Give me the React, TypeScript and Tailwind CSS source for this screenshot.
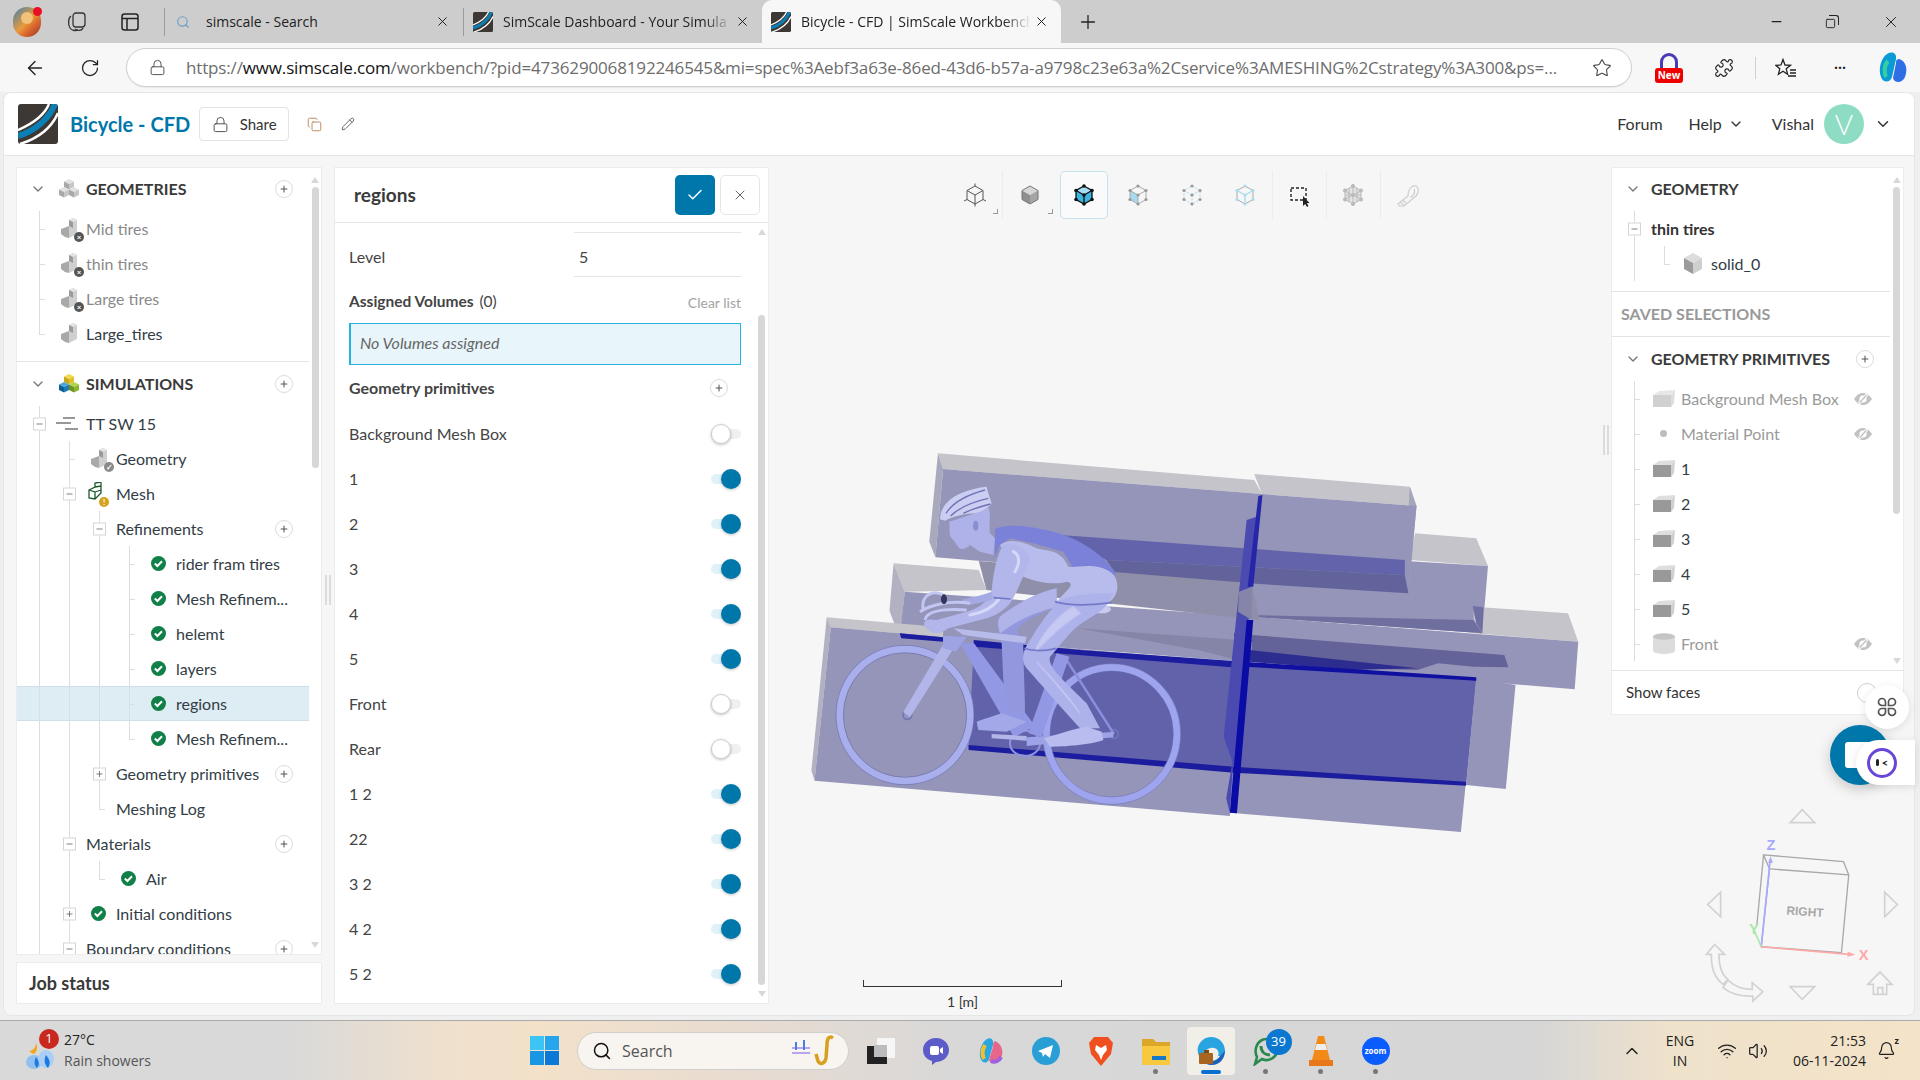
import type { ReactNode } from 'react'
import clsx from 'clsx'
import {
  ArrowLeft, Bell, Check, ChevronDown, ChevronUp, Copy, Lock, Pencil, Plus, Puzzle, RotateCw, Search, Star, Volume2, Wifi, X, Minus, Square,
} from 'lucide-react'

const Logo = ({ size = 40 }: { size?: number }) => (
  <svg width={size} height={size} viewBox="0 0 40 40">
    <rect width="40" height="40" rx="3" fill="#3d3833" />
    <path d="M0 26 C14 20 26 12 31 0" stroke="#fff" strokeWidth="2.5" fill="none" />
    <path d="M0 32 C17 27 31 15 37 0" stroke="#0a7fb5" strokeWidth="6" fill="none" />
    <path d="M2 40 C18 35 33 25 40 9" stroke="#fff" strokeWidth="2.5" fill="none" />
  </svg>
)

const PlusBtn = () => (
  <span className="flex h-[18px] w-[18px] shrink-0 items-center justify-center rounded-full border border-[#dcdcdc] bg-white text-[#555]">
    <Plus size={10} strokeWidth={2.5} />
  </span>
)

const HiddenEye = () => (
  <svg width="18" height="12" viewBox="0 0 18 12">
    <path d="M0 6 C3 1.5 6 0 9 0 C12 0 15 1.5 18 6 C15 10.5 12 12 9 12 C6 12 3 10.5 0 6Z" fill="#c2c2c2" />
    <circle cx="9" cy="6" r="3.6" fill="#fff" />
    <path d="M5 10.5 L13 1.5" stroke="#fff" strokeWidth="3" />
    <path d="M5.6 9.8 L12.4 2.2" stroke="#c2c2c2" strokeWidth="1.3" />
  </svg>
)

const Tires = ({ badge }: { badge?: 'x' | 'ok' | 'warn' }) => (
  <span className="relative ml-[5px] block h-[24px] w-[24px]">
    <svg width="16" height="20" viewBox="0 0 16 20" className="mt-[1px]">
      <path d="M8 2 L12 0 L16 2 L16 7 L16 16 L8 20 L8 8 Z" fill="#cfcfcf" />
      <path d="M8 2 L12 4 L16 2 L12 0Z" fill="#e4e4e4" />
      <path d="M8 8 L0 11 L0 16 L4 19 L8 20 Z" fill="#a9a9a9" />
      <path d="M8 2 L8 8 L12 10 L12 4Z" fill="#9a9a9a" />
    </svg>
    {badge && (
      <span className={clsx('absolute bottom-[-1px] right-[1px] flex h-[10px] w-[10px] items-center justify-center rounded-full text-[8px] font-bold leading-none text-white', badge === 'x' && 'bg-[#555]', badge === 'ok' && 'bg-[#8a8a8a]')}>
        {badge === 'x' ? '×' : '✓'}
      </span>
    )}
  </span>
)

const MeshIcon = () => (
  <span className="relative ml-[1px] block h-[24px] w-[24px]">
    <svg width="18" height="18" viewBox="0 0 18 18" fill="none" stroke="#1f5a2e" strokeWidth="1.3">
      <path d="M2 8 L8 5 L8 1 L14 0 L14 11 L8 17 L2 16 Z M8 5 L14 4 M2 8 L8 10 L8 17 M8 10 L14 8" />
    </svg>
    <span className="absolute bottom-[-1px] right-[2px] flex h-[10px] w-[10px] items-center justify-center rounded-full bg-[#d6a21d] text-[8px] font-bold leading-none text-white">!</span>
  </span>
)

const IsoCube = ({ x, y, shades }: { x: number; y: number; shades: [string, string, string] }) => (
  <g transform={`translate(${x} ${y})`}>
    <path d="M5 0 L10 2.5 L5 5 L0 2.5Z" fill={shades[0]} />
    <path d="M0 2.5 L5 5 L5 10.5 L0 8Z" fill={shades[1]} />
    <path d="M10 2.5 L5 5 L5 10.5 L10 8Z" fill={shades[2]} />
  </g>
)

const GeoCluster = ({ color }: { color: boolean }) => (
  <svg width="20" height="19" viewBox="0 0 20 19" className="ml-[3px]">
    <IsoCube x={5} y={0} shades={color ? ['#f2d84a', '#c9a81e', '#e0bf2a'] : ['#e2e2e2', '#a8a8a8', '#c6c6c6']} />
    <IsoCube x={0} y={8} shades={color ? ['#4aa6de', '#0c5f96', '#1b7ab8'] : ['#e2e2e2', '#a8a8a8', '#c6c6c6']} />
    <IsoCube x={10} y={8} shades={color ? ['#b2d44a', '#6f9420', '#8bb52e'] : ['#e2e2e2', '#a8a8a8', '#c6c6c6']} />
  </svg>
)

const SimIcon = () => (
  <svg width="22" height="14" viewBox="0 0 22 14" stroke="#777" strokeWidth="1.4">
    <path d="M7 1 H19 M0 6 H15 M9 12 H22" />
  </svg>
)

const Ok = ({ className = '' }: { className?: string }) => (
  <svg width="15" height="15" viewBox="0 0 15 15" className={clsx('ml-[5px]', className)}>
    <circle cx="7.5" cy="7.5" r="7.5" fill="#108048" />
    <path d="M3.8 7.6 L6.4 10 L11 5.2" stroke="#fff" strokeWidth="2" fill="none" />
  </svg>
)

const PrimBox = ({ muted }: { muted?: boolean }) => (
  <svg width="22" height="17" viewBox="0 0 22 17" className={clsx('ml-[2px]', muted && 'opacity-70')}>
    <path d="M0 5 L6 1 L22 0 L18 5 Z" fill="#dedede" />
    <path d="M18 5 L22 0 L21 13 L18 17 Z" fill="#d0d0d0" />
    <rect y="5" width="18" height="12" fill={muted ? '#bdbdbd' : '#999'} />
  </svg>
)

const Cylinder = () => (
  <svg width="22" height="21" viewBox="0 0 22 21" className="ml-[2px]">
    <rect y="3" width="22" height="15" fill="#dcdcdc" />
    <ellipse cx="11" cy="18" rx="11" ry="3" fill="#dcdcdc" />
    <ellipse cx="11" cy="3.5" rx="11" ry="3.2" fill="#c4c4c4" />
  </svg>
)

const Cube = () => (
  <svg width="18" height="21" viewBox="0 0 18 21" className="ml-[3px]">
    <path d="M9 0 L18 5 L9 10 L0 5Z" fill="#dcdcdc" />
    <path d="M0 5 L9 10 L9 21 L0 16Z" fill="#9b9b9b" />
    <path d="M18 5 L9 10 L9 21 L18 16Z" fill="#cfcfcf" />
  </svg>
)

type RowProps = {
  depth?: number
  box?: '+' | '-'
  end?: boolean
  icon?: ReactNode
  label: string
  plus?: boolean
  eye?: boolean
  tone?: string
  active?: boolean
}

const Row = ({ depth = 1, box, end, icon, label, plus, eye, tone = 'text-[#333d45]', active }: RowProps) => (
  <div className={clsx('flex h-[35px] items-stretch pl-[22px] pr-4', active && 'border-y border-[#cde0ea] bg-[#deecf4]')}>
    {Array.from({ length: depth - 1 }, (_, i) => (
      <span key={i} className="w-[30px] shrink-0 border-l border-[#d8dfe3]" />
    ))}
    <span className="relative w-[17px] shrink-0">
      <span className={clsx('absolute left-0 top-0 w-px bg-[#d8dfe3]', end ? 'h-1/2' : 'h-full')} />
      <span className="absolute left-0 top-1/2 h-px w-[6px] bg-[#d8dfe3]" />
      {box && (
        <span className="absolute left-[-6px] top-1/2 flex h-[13px] w-[13px] -translate-y-1/2 items-center justify-center border border-[#d5d5d5] bg-white text-[#555]">
          {box === '+' ? <Plus size={9} /> : <Minus size={9} />}
        </span>
      )}
    </span>
    {icon && <span className="flex w-[30px] shrink-0 items-center">{icon}</span>}
    <span className={clsx('flex flex-1 items-center whitespace-nowrap text-[16px]', tone)}>{label}</span>
    {plus && <span className="flex items-center"><PlusBtn /></span>}
    {eye && (
      <span className="flex items-center pr-[2px]">
        <HiddenEye />
      </span>
    )}
  </div>
)

const Section = ({ label, icon, plus, className = '' }: { label: string; icon?: ReactNode; plus?: boolean; className?: string }) => (
  <div className={clsx('flex h-[35px] items-center pl-[13px] pr-4', className)}>
    <span className="flex w-[26px] shrink-0 text-[#777]"><ChevronDown size={16} /></span>
    {icon && <span className="flex w-[30px] shrink-0 items-center">{icon}</span>}
    <span className="flex-1 whitespace-nowrap text-[16px] font-bold text-[#3a3a3a]">{label}</span>
    {plus && <PlusBtn />}
  </div>
)

const ScrollBar = ({ top, height, gapTop = 0, w = 'w-[13px]' }: { top: number; height: number; gapTop?: number; w?: string }) => (
  <div className={clsx('flex shrink-0 flex-col items-center', w)} style={{ paddingTop: top }}>
    <span className="h-0 w-0 border-x-[4px] border-b-[6px] border-x-transparent border-b-[#d8d8d8]" />
    <span className="w-[7px] rounded-full bg-[#d7d7d7]" style={{ height, marginTop: gapTop }} />
    <span className="flex-1" />
    <span className="mb-[6px] h-0 w-0 border-x-[4px] border-t-[6px] border-x-transparent border-t-[#d8d8d8]" />
  </div>
)

const Toggle = ({ on }: { on?: boolean }) => (
  <span className={clsx('flex h-[10px] w-[30px] items-center rounded-full', on ? 'justify-end bg-[#dff1f9]' : 'justify-start bg-[#f0f0f0]')}>
    <span className={clsx('h-[20px] w-[20px] rounded-full shadow-[0_1px_3px_rgba(0,0,0,.25)]', on ? 'bg-[#0077aa]' : 'border border-[#cfcfcf] bg-white')} />
  </span>
)

const toggles: [string, boolean][] = [
  ['Background Mesh Box', false], ['1', true], ['2', true], ['3', true], ['4', true], ['5', true],
  ['Front', false], ['Rear', false], ['1 2', true], ['22', true], ['3 2', true], ['4 2', true], ['5 2', true],
]

const hex = 'M12 3 L20 7.5 L20 16.5 L12 21 L4 16.5 L4 7.5 Z'
const inner = 'M4 7.5 L12 12 L20 7.5 M12 12 L12 21'
const Dots = ({ fill, r = 1.6 }: { fill: string; r?: number }) => (
  <>
    {[[12, 3], [20, 7.5], [20, 16.5], [12, 21], [4, 16.5], [4, 7.5], [12, 12]].map(([x, y]) => (
      <circle key={`${x}-${y}`} cx={x} cy={y} r={r} fill={fill} />
    ))}
  </>
)

const ToolIcon = ({ kind }: { kind: number }) => (
  <svg width="24" height="24" viewBox="0 0 24 24" fill="none">
    {kind === 1 && (
      <>
        <path d={hex} stroke="#555" strokeWidth="1" />
        <path d={inner} stroke="#555" strokeWidth="1" />
        <path d="M12 3 V0.5 M20 16.5 L23 18 M4 16.5 L1 18 M12 21 V23.5" stroke="#555" strokeWidth="1" />
      </>
    )}
    {kind === 2 && (
      <>
        <path d="M12 3 L20 7.5 L12 12 L4 7.5Z" fill="#d7d7d7" />
        <path d="M4 7.5 L12 12 L12 21 L4 16.5Z" fill="#8f8f8f" />
        <path d="M20 7.5 L12 12 L12 21 L20 16.5Z" fill="#a5a5a5" />
        <path d={hex} stroke="#777" strokeWidth="1" />
      </>
    )}
    {kind === 3 && (
      <>
        <path d="M12 3 L20 7.5 L12 12 L4 7.5Z" fill="#a6dff4" />
        <path d="M4 7.5 L12 12 L12 21 L4 16.5Z" fill="#3cb4e0" />
        <path d="M20 7.5 L12 12 L12 21 L20 16.5Z" fill="#3cb4e0" />
        <path d={hex} stroke="#111" strokeWidth="1.3" />
        <path d={inner} stroke="#111" strokeWidth="1.3" />
        <Dots fill="#111" r={1.8} />
      </>
    )}
    {kind === 4 && (
      <>
        <path d="M4 7.5 L12 12 L12 21 L4 16.5Z" fill="#a9d9ec" />
        <path d={hex} stroke="#aaa" strokeWidth="1" />
        <path d={inner} stroke="#aaa" strokeWidth="1" />
        <Dots fill="#999" />
      </>
    )}
    {kind === 5 && (
      <>
        <path d={hex} stroke="#a9d9ec" strokeWidth="1" strokeDasharray="2 1.4" />
        <path d={inner} stroke="#a9d9ec" strokeWidth="1" strokeDasharray="2 1.4" />
        <Dots fill="#999" />
      </>
    )}
    {kind === 6 && (
      <>
        <path d={hex} stroke="#aaa" strokeWidth="1" />
        <path d={inner} stroke="#a9dcf0" strokeWidth="1.4" />
        <Dots fill="#a9dcf0" />
      </>
    )}
    {kind === 7 && (
      <>
        <rect x="4" y="5" width="15" height="12" stroke="#222" strokeWidth="1.4" strokeDasharray="3 2" />
        <path d="M16 13 L16 23 L18.2 21 L20 24 L21.5 23 L19.8 20.2 L22.5 20 Z" fill="#222" />
      </>
    )}
    {kind === 8 && (
      <g stroke="#bbb" strokeWidth="1">
        <path d={hex} fill="#e3e3e3" />
        <path d="M8 5 V19 M12 3 V21 M16 5 V19 M4 12 L20 12 M4 8 L20 16 M4 16 L20 8" />
        <Dots fill="#bbb" />
      </g>
    )}
    {kind === 9 && (
      <path d="M2 21 L12 13 C12 6 16 2 20 3 C23 4 23 10 20 13 L8 23 L3 23 Z M14 14 C17 14 20 9 18 6 M4 19 L8 22 M7 17 L10 20" stroke="#ccc" strokeWidth="1.1" />
    )}
  </svg>
)

const Tool = ({ kind, corner, active, sep }: { kind: number; corner?: boolean; active?: boolean; sep?: boolean }) => (
  <span className={clsx('relative flex h-[48px] w-[54px] items-center justify-center', sep && 'border-r border-[#ececec]')}>
    {active && <span className="absolute inset-y-0 left-[3px] right-[3px] rounded-[5px] border border-[#c5e2ef] bg-[#fafafa]" />}
    <span className="relative flex"><ToolIcon kind={kind} /></span>
    {corner && <span className="absolute bottom-[5px] right-[4px] h-[5px] w-[5px] border-b border-r border-[#999]" />}
  </span>
)

const Rider = () => (
  <g transform="translate(137.2 180) scale(.6533 1)">
    {/* wheels */}
    <g fill="none">
      <ellipse cx="135" cy="705" rx="196" ry="198" stroke="#a9aeec" strokeWidth="22" />
      <ellipse cx="135" cy="705" rx="207" ry="209" stroke="#5a5d9c" strokeWidth="1.5" />
      <ellipse cx="135" cy="705" rx="185" ry="187" stroke="#5a5d9c" strokeWidth="1.5" />
      <ellipse cx="755" cy="762" rx="196" ry="200" stroke="#9ea4ee" strokeWidth="22" />
      <ellipse cx="755" cy="762" rx="207" ry="211" stroke="#6a6dac" strokeWidth="1.5" />
      <ellipse cx="755" cy="762" rx="185" ry="189" stroke="#6a6dac" strokeWidth="1.5" />
      <ellipse cx="495" cy="790" rx="45" ry="38" stroke="#8f94dd" strokeWidth="6" />
      <circle cx="142" cy="705" r="13" stroke="#7075b8" strokeWidth="5" />
      <circle cx="762" cy="762" r="13" stroke="#7075b8" strokeWidth="5" />
      <path d="M620 540 L762 762" stroke="#8a8fde" strokeWidth="7" />
    </g>
    {/* frame */}
    <path d="M252 490 L284 500 L150 712 L130 696Z" fill="#b1b5e8" />
    <path d="M250 468 L320 470 L288 515 L248 505Z" fill="#9ea3e4" />
    <path d="M300 490 L342 490 L525 738 L462 772Z" fill="#9298e4" />
    <path d="M590 520 L628 530 L545 770 L505 760Z" fill="#9298e4" />
    <path d="M500 772 L760 756 L760 772 L500 798Z" fill="#9ea3e8" />
    <path d="M395 762 L500 768 L500 782 L395 775Z" fill="#b1b5e8" />
    {/* far leg */}
    <path d="M590 325 C540 335 470 370 420 410 C405 430 420 460 425 490 L430 600 C435 650 445 680 455 700 L495 695 C495 640 490 560 490 490 L470 450 C490 420 540 400 590 380Z" fill="#9398de" />
    <path d="M590 325 C540 335 470 370 420 410 C410 425 415 440 420 460 C470 420 530 395 590 380Z" fill="#b0b4e8" />
    <path d="M350 725 C380 715 410 705 425 700 L500 725 L440 755 L355 750 Z" fill="#a3a8e8" />
    <path d="M280 445 L500 470 L495 490 L310 465Z" fill="#b7bbea" />
    {/* jersey and torso */}
    <path d="M405 148 C430 130 500 135 580 155 C660 175 740 230 770 285 L640 265 L610 215 L520 190 L450 175 L420 195 L405 230Z" fill="#7b80d8" />
    <path d="M420 195 C450 170 500 190 530 205 C560 215 600 205 625 260 C650 265 700 245 750 275 C775 290 780 330 760 355 C745 375 715 375 690 375 L590 365 C620 330 650 310 620 305 C590 315 540 310 490 290 C470 260 440 230 420 195Z" fill="#b8bcec" />
    <ellipse cx="725" cy="388" rx="28" ry="12" fill="#c8cbf0" />
    {/* near leg */}
    <path d="M760 340 C740 400 690 405 640 450 C610 480 590 510 570 530 C560 560 620 610 680 670 L720 745 L660 745 C600 680 540 610 500 565 C480 540 490 510 510 480 C540 430 570 390 600 360 C650 340 720 340 760 340 Z" fill="#aeb2ea" />
    <path d="M640 380 C590 410 540 470 525 515 C560 480 610 430 660 400Z M530 545 C570 590 620 640 660 700" fill="#c6c9f2" stroke="#c6c9f2" strokeWidth="6" strokeOpacity=".55" />
    <path d="M552 775 C600 760 650 745 680 740 L725 755 L730 780 C690 795 610 800 570 800Z" fill="#b9bcee" />
    {/* near arm */}
    <path d="M430 195 C470 180 520 215 505 250 C490 290 470 340 450 370 C430 395 400 410 380 415 L265 445 C240 465 215 465 195 440 C185 420 205 415 230 420 L320 395 C360 385 390 360 395 330 C400 280 410 225 430 195Z" fill="#b2b6ea" />
    <path d="M460 215 C480 225 480 250 465 275 M330 405 C360 400 395 385 415 360" stroke="#d6d8f7" strokeWidth="9" fill="none" strokeLinecap="round" />
    <path d="M395 335 C370 345 340 350 305 360 L330 375 L395 360Z" fill="#a4a9e2" />
    {/* bands where the block edge passes through */}
    <path d="M585 365 C640 380 690 375 755 368 M492 505 C520 515 560 512 590 505 M400 353 L452 357" stroke="#7478cc" strokeWidth="5" fill="none" />
    {/* handlebars */}
    <g fill="none" stroke="#c2c6f2" strokeWidth="9">
      <path d="M190 390 C180 345 220 328 250 345" />
      <path d="M180 395 C210 375 270 360 330 370" />
      <path d="M195 420 C200 395 240 385 320 390" />
    </g>
    <ellipse cx="252" cy="358" rx="9" ry="15" fill="#33345f" />
    {/* head */}
    <path d="M268 125 L345 100 L385 80 C395 110 385 140 390 160 L405 175 L400 225 L360 215 L330 195 C320 205 305 210 298 205 C290 195 285 185 275 175 C265 165 270 145 268 125Z" fill="#aeb2e8" />
    <ellipse cx="347" cy="137" rx="8" ry="15" fill="#8a8fd0" />
    <path d="M240 118 C240 70 290 30 380 20 C385 45 395 65 395 72 C380 85 365 95 345 100 C310 100 275 112 255 122 Z" fill="#cbcef1" />
    <path d="M258 100 C280 65 320 45 375 30 M272 108 C300 80 340 65 385 55 M310 100 C330 90 360 80 392 72" stroke="#6f74b8" strokeWidth="4" fill="none" />
  </g>
)

const Scene = () => (
  <svg width="800" height="450" viewBox="0 0 1568 1350" preserveAspectRatio="none" className="absolute left-[21px] top-[253px]">
    {/* rear blocks */}
    <polygon points="1225,340 1345,355 1368,438 1215,420" fill="#c4c4ca" />
    <polygon points="905,395 1368,438 1357,640 905,590" fill="#9595b9" />
    <polygon points="1340,560 1525,580 1545,665 1340,640" fill="#c4c4ca" />
    <polygon points="905,590 1545,665 1538,808 900,725" fill="#9595b9" />
    <polygon points="1338,558 1360,562 1357,640 1345,610" fill="#6f6fa4" />
    <polygon points="905,585 1340,600 1357,640 905,590" fill="#6f6f9f" />
    <polygon points="905,645 1400,705 1408,742 1340,740 1270,730 1230,750 1100,745 905,725" fill="#636399" />
    <polygon points="900,690 1230,745 1100,750 900,725" fill="#2d2d8f" />
    <polygon points="290,100 910,180 925,222 300,147" fill="#c4c4ca" />
    <polygon points="290,100 300,147 285,412 273,365" fill="#a9a9bd" />
    <polygon points="300,147 925,222 905,490 285,412" fill="#9595b9" />
    <polygon points="910,162 1215,200 1228,258 925,222" fill="#c4c4ca" />
    <polygon points="1215,200 1228,258 1212,520 1204,470" fill="#a5a5bb" />
    <polygon points="925,222 1228,258 1212,520 905,490" fill="#9595b9" />
    <polygon points="530,345 1205,420 1205,465 620,420" fill="#6363ab" />
    <polygon points="620,420 1205,465 1212,520 640,465" fill="#63639b" />
    {/* middle block */}
    <polygon points="203,430 370,450 385,510 225,515" fill="#c4c4ca" />
    <polygon points="203,430 225,515 215,655 195,572" fill="#b1b1c2" />
    <polygon points="225,515 905,590 890,725 215,645" fill="#9595b9" />
    <polygon points="565,625 880,660 890,725 800,690" fill="#8585a8" />
    {/* front blocks */}
    <polygon points="1345,775 1422,795 1403,1107 1325,1095" fill="#9595b9" />
    <polygon points="72,592 300,622 300,652 80,622" fill="#c4c4ca" />
    <polygon points="72,592 80,622 48,1082 42,1052" fill="#b1b1c2" />
    <polygon points="80,622 890,730 862,1188 48,1082" fill="#9595b9" />
    <polygon points="890,730 1345,775 1315,1236 862,1178" fill="#9595b9" />
    <polygon points="360,680 890,735 1345,775 1325,1095 350,985" fill="#6262ab" />
    <polygon points="215,640 300,652 300,665 218,655" fill="#1c1c9e" />
    <polygon points="360,660 570,690 890,725 890,745 360,680" fill="#1c1c9e" />
    <polygon points="890,725 1345,772 1345,782 890,740" fill="#1010a0" />
    <polygon points="350,975 870,1040 1325,1085 1325,1097 870,1058 350,990" fill="#1c1c9e" />
    <polygon points="870,640 905,660 890,730 880,720" fill="#2a2a8a" />
    {/* underside between the upper and middle blocks */}
    <polygon points="370,423 905,490 920,600 385,510" fill="#8f8fa9" />
    {/* centre slabs */}
    <polygon points="895,300 915,290 875,1060 850,950" fill="#4a4ab0" />
    <polygon points="918,228 926,225 908,500 897,500" fill="#2626a8" />
    <polygon points="895,600 908,600 876,1180 862,1178" fill="#0b0ba6" />
    <polygon points="855,1135 870,1000 862,1178" fill="#4a4ab0" />
    <polygon points="880,515 905,500 905,600 878,575" fill="#8585a9" />
    <Rider />
  </svg>
)

const Gizmo = () => (
  <svg width="213" height="203" viewBox="100 430 640 610" fill="none" className="absolute left-[924px] top-[636px]">
    <g stroke="#d2d2d2" strokeWidth="5">
      <path d="M392 489 L428 450 L466 489 Z" />
      <path d="M392 982 L466 982 L428 1020 Z" />
      <path d="M183 698 L183 772 L144 735 Z" />
      <path d="M676 698 L676 772 L714 735 Z" />
      <path d="M140 885 L165 855 L195 885 L178 885 C178 920 185 945 205 960 L190 975 C160 950 155 920 155 885 Z" />
      <path d="M190 985 L205 962 C230 985 250 990 278 990 L278 970 L310 997 L280 1025 L280 1010 C245 1012 215 1005 190 985 Z" />
      <path d="M625 975 L662 938 L698 975 L682 975 L682 1005 L642 1005 L642 975 Z M655 1005 V985 H670 V1005" />
    </g>
    <g stroke="#a8a8a8" strokeWidth="4">
      <path d="M312 586 L552 606 L568 646 L546 880 L305 862 L330 628 Z" />
      <path d="M312 586 L292 795 M330 628 L568 646" />
    </g>
    <text x="380" y="765" fontFamily="Liberation Sans, sans-serif" fontWeight="700" fontSize="36" fill="#a8a8a8" transform="rotate(4 380 765)">RIGHT</text>
    <path d="M305 862 L332 600" stroke="#a8a8ff" strokeWidth="5" />
    <path d="M326 610 L333 590 L340 610Z" fill="#a8a8ff" />
    <path d="M305 862 L570 885" stroke="#ffa8a8" strokeWidth="5" />
    <path d="M565 877 L588 886 L564 892Z" fill="#ffa8a8" />
    <path d="M305 862 L285 815" stroke="#a8e8a8" strokeWidth="5" />
    <text x="321" y="571" fontFamily="Liberation Sans, sans-serif" fontWeight="700" fontSize="44" fill="#a8a8ff">Z</text>
    <text x="598" y="902" fontFamily="Liberation Sans, sans-serif" fontWeight="700" fontSize="44" fill="#ffa8a8">X</text>
    <text x="268" y="824" fontFamily="Liberation Sans, sans-serif" fontWeight="700" fontSize="44" fill="#a8e8a8">Y</text>
  </svg>
)

const Grip = () => (
  <span className="flex gap-[2px]">
    <span className="h-[30px] w-[2px] bg-[#dcdcdc]" />
    <span className="h-[30px] w-[2px] bg-[#dcdcdc]" />
  </span>
)

const TabFav = () => <span className="mr-[10px] shrink-0"><Logo size={20} /></span>

const TabBar = () => (
  <div className="flex h-[43px] items-center bg-[#cdcdcd] [font-family:'Open_Sans',sans-serif] text-[14px] text-[#222]">
    <div className="flex w-[164px] shrink-0 items-center pl-[13px]">
      <span className="relative block h-[30px] w-[28px] rounded-full bg-[linear-gradient(135deg,#3d7fb5,#e89b3a_50%,#d9622c_70%,#8a3a2c)]">
        <span className="absolute left-[8px] top-[5px] h-[12px] w-[12px] rounded-full bg-[#f3c27a]" />
        <span className="absolute right-[-1px] top-0 h-[9px] w-[9px] rounded-full bg-[#e81123]" />
      </span>
      <svg width="22" height="22" viewBox="0 0 22 22" fill="none" stroke="#333" strokeWidth="1.3" className="ml-[25px]">
        <rect x="7" y="2" width="12" height="14" rx="3" />
        <path d="M5 5 C2 7 2 14 4 17 C6 20 10 20 12 19" />
        <path d="M9 18 C12 20 16 20 17 17" />
      </svg>
      <svg width="20" height="20" viewBox="0 0 20 20" fill="none" stroke="#222" strokeWidth="1.5" className="ml-[32px]">
        <rect x="2" y="2" width="16" height="16" rx="2.5" />
        <path d="M2 6.5 H18 M7 6.5 V18" />
      </svg>
    </div>
    <div className="flex h-[28px] w-[299px] shrink-0 items-center border-l border-[#9b9b9b] pl-[11px] pr-[13px]">
      <Search size={14} className="mr-[16px] text-[#6f9fc4]" />
      <span className="flex-1">simscale - Search</span>
      <X size={15} strokeWidth={1.6} />
    </div>
    <div className="flex h-[28px] w-[299px] shrink-0 items-center border-l border-[#9b9b9b] pl-[9px] pr-[12px]">
      <TabFav />
      <span className="flex-1 overflow-hidden whitespace-nowrap [mask-image:linear-gradient(90deg,#000_88%,transparent)]">SimScale Dashboard - Your Simula</span>
      <X size={15} strokeWidth={1.6} className="ml-[3px] shrink-0" />
    </div>
    <div className="flex h-[43px] w-[299px] shrink-0 items-center self-end rounded-t-[10px] bg-[#f7f7f7] pl-[9px] pr-[12px]">
      <TabFav />
      <span className="flex-1 overflow-hidden whitespace-nowrap [mask-image:linear-gradient(90deg,#000_88%,transparent)]">Bicycle - CFD | SimScale Workbench</span>
      <X size={15} strokeWidth={1.6} className="ml-[3px] shrink-0" />
    </div>
    <Plus size={22} strokeWidth={1.4} className="ml-[16px]" />
    <div className="flex-1" />
    <Minus size={15} className="mr-[41px]" />
    <span className="relative mr-[43px] block h-[14px] w-[14px]">
      <Square size={11} className="absolute bottom-0 left-0" />
      <span className="absolute right-0 top-0 h-[10px] w-[10px] rounded-tr-[3px] border-r border-t border-[#222]" />
    </span>
    <X size={18} strokeWidth={1.3} className="mr-[20px]" />
  </div>
)

const AddressBar = () => (
  <div className="flex h-[49px] items-center bg-[#f7f7f7] [font-family:'Open_Sans',sans-serif] text-[#222]">
    <ArrowLeft size={22} strokeWidth={1.5} className="ml-[24px]" />
    <RotateCw size={20} strokeWidth={1.5} className="ml-[34px]" />
    <div className="ml-[26px] flex h-[39px] w-[1506px] items-center rounded-full border border-[#cfcfcf] bg-white pl-[22px] pr-[19px] shadow-[0_1px_1px_rgba(0,0,0,.06)]">
      <Lock size={17} strokeWidth={1.4} className="text-[#555]" />
      <span className="ml-[20px] flex-1 truncate text-[17px] tracking-[-0.15px] text-[#6d6d6d]">
        https://<span className="text-[#111]">www.simscale.com</span>/workbench/?pid=4736290068192246545&amp;mi=spec%3Aebf3a63e-86ed-43d6-b57a-a9798c23e63a%2Cservice%3AMESHING%2Cstrategy%3A300&amp;ps=...
      </span>
      <Star size={20} strokeWidth={1.3} className="ml-[16px] text-[#444]" />
    </div>
    <span className="relative ml-[23px] block h-[30px] w-[28px]">
      <span className="absolute left-[5px] top-0 h-[20px] w-[18px] rounded-t-full border-[3px] border-[#4a3bb5]" />
      <span className="absolute bottom-0 left-0 flex h-[15px] w-[28px] items-center justify-center rounded-[3px] bg-[#ee0000] text-[10px] font-bold leading-none text-white">New</span>
    </span>
    <Puzzle size={20} strokeWidth={1.4} className="ml-[31px]" />
    <span className="ml-[21px] h-[22px] w-px bg-[#cfcfcf]" />
    <svg width="22" height="20" viewBox="0 0 22 20" fill="none" stroke="#222" strokeWidth="1.3" className="ml-[19px]">
      <path d="M8 1.5 L10 7 L15.5 7.3 L11.2 10.8 L12.6 16.2 L8 13.2 L3.4 16.2 L4.8 10.8 L0.8 7.3 L6 7Z" />
      <path d="M15 12 H21 M15 15 H21 M13 18 H21" />
    </svg>
    <span className="ml-[37px] text-[14px] font-bold leading-none">···</span>
    <svg width="30" height="34" viewBox="0 0 30 34" className="ml-[32px]">
      <path d="M9 3 C14 0 19 2 18 8 L14 26 C12 32 5 32 3 26 C0 18 3 7 9 3Z" fill="#0a9ad6" />
      <path d="M21 8 C28 10 30 18 27 26 C24 33 16 32 15 27 L18 12 C18 9 19 8 21 8Z" fill="#2f6ee5" />
      <path d="M10 10 C6 14 6 22 8 26" stroke="#35d0a0" strokeWidth="4" fill="none" />
    </svg>
  </div>
)

const AppHeader = () => (
  <div className="flex h-[63px] items-center rounded-t-[8px] border-b border-[#e6e6e6] bg-white pl-[14px] text-[#333]">
    <Logo size={40} />
    <span className="ml-[12px] text-[20px] font-bold text-[#0077aa]">Bicycle - CFD</span>
    <span className="ml-[9px] flex h-[34px] w-[90px] items-center justify-center gap-[11px] rounded-[4px] border border-[#e4e4e4] text-[15px]">
      <Lock size={17} strokeWidth={1.4} className="text-[#555]" />
      Share
    </span>
    <Copy size={15} strokeWidth={1.4} className="ml-[18px] text-[#b57d4e]" />
    <Pencil size={14} strokeWidth={1.5} className="ml-[19px] text-[#555]" />
    <div className="flex-1" />
    <span className="text-[16px]">Forum</span>
    <span className="ml-[26px] text-[16px]">Help</span>
    <ChevronDown size={16} className="ml-[6px]" />
    <span className="ml-[28px] text-[16px]">Vishal</span>
    <span className="ml-[10px] flex h-[40px] w-[40px] items-center justify-center rounded-full bg-[#8fdcc5] text-[28px] font-light text-white">V</span>
    <ChevronDown size={18} className="ml-[10px] mr-[22px]" />
  </div>
)

// every row below sits under "TT SW 15", so its trunk line is drawn by depth
const TreeBody = () => (
  <>
    <Row depth={2} icon={<Tires badge="ok" />} label="Geometry" />
    <Row depth={2} box="-" icon={<MeshIcon />} label="Mesh" />
    <Row depth={3} box="-" label="Refinements" plus />
    <Row depth={4} icon={<Ok />} label="rider fram tires" />
    <Row depth={4} icon={<Ok />} label="Mesh Refinem..." />
    <Row depth={4} icon={<Ok />} label="helemt" />
    <Row depth={4} icon={<Ok />} label="layers" />
    <Row depth={4} icon={<Ok />} label="regions" active />
    <Row depth={4} end icon={<Ok />} label="Mesh Refinem..." />
    <Row depth={3} box="+" label="Geometry primitives" plus />
    <Row depth={3} end label="Meshing Log" />
    <Row depth={2} box="-" label="Materials" plus />
    <Row depth={3} end icon={<Ok />} label="Air" />
    <Row depth={2} box="+" icon={<Ok />} label="Initial conditions" />
    <Row depth={2} box="-" label="Boundary conditions" plus />
  </>
)

const LeftPanel = () => (
  <div className="flex w-[306px] shrink-0 flex-col gap-[7px]">
    <div className="flex h-[788px] overflow-hidden border border-[#ececec] bg-white">
      <div className="flex-1 overflow-hidden pt-[3px]">
        <Section label="GEOMETRIES" icon={<GeoCluster color={false} />} plus className="mb-[5px]" />
        <Row icon={<Tires badge="x" />} label="Mid tires" tone="text-[#8a8a8a]" />
        <Row icon={<Tires badge="x" />} label="thin tires" tone="text-[#8a8a8a]" />
        <Row icon={<Tires badge="x" />} label="Large tires" tone="text-[#8a8a8a]" />
        <Row end icon={<Tires />} label="Large_tires" />
        <div className="mb-[4px] mt-[10px] h-px bg-[#e4e4e4]" />
        <Section label="SIMULATIONS" icon={<GeoCluster color />} plus className="mb-[5px]" />
        <Row box="-" icon={<SimIcon />} label="TT SW 15" />
        <TreeBody />
      </div>
      <ScrollBar top={9} height={281} gapTop={4} w="w-[12px]" />
    </div>
    <div className="flex h-[42px] items-center border border-[#ececec] bg-white pl-[12px] text-[18px] font-bold text-[#3a3a3a]">Job status</div>
  </div>
)

const CenterPanel = () => (
  <div className="flex w-[435px] shrink-0 flex-col overflow-hidden border border-[#ececec] bg-white text-[#444]">
    <div className="flex h-[55px] shrink-0 items-center border-b border-[#e6e6e6] pl-[19px] pr-[8px]">
      <span className="flex-1 text-[19px] font-bold text-[#3a3a3a]">regions</span>
      <span className="flex h-[40px] w-[40px] items-center justify-center rounded-[5px] bg-[#0077aa] text-white"><Check size={18} /></span>
      <span className="ml-[5px] flex h-[40px] w-[40px] items-center justify-center rounded-[5px] border border-[#e6e6e6] text-[#666]"><X size={16} strokeWidth={1.5} /></span>
    </div>
    <div className="flex min-h-0 flex-1">
      <div className="ml-[14px] w-[392px] shrink-0 overflow-hidden pt-[9px]">
        <div className="ml-[225px] h-px bg-[#e6e6e6]" />
        <div className="flex h-[43px] items-center pt-[5px] text-[16px]">
          <span className="w-[230px]">Level</span>
          <span>5</span>
        </div>
        <div className="ml-[225px] h-px bg-[#e6e6e6]" />
        <div className="mt-[13px] flex h-[24px] items-center justify-between">
          <span className="text-[15.5px] font-bold">Assigned Volumes <span className="ml-[2px] font-normal">(0)</span></span>
          <span className="text-[14px] text-[#a3a3a3]">Clear list</span>
        </div>
        <div className="mt-[9px] flex h-[42px] items-center border border-l-2 border-[#25b3e3] bg-[#e8f5fb] pb-[2px] pl-[9px] text-[16px] italic text-[#666]">No Volumes assigned</div>
        <div className="mt-[11px] flex h-[24px] items-center justify-between pr-[13px]">
          <span className="text-[16px] font-bold">Geometry primitives</span>
          <PlusBtn />
        </div>
        <div className="mt-[11px]">
          {toggles.map(([label, on]) => (
            <div key={label} className="flex h-[45px] items-center justify-between text-[16px]">
              <span>{label}</span>
              <Toggle on={on} />
            </div>
          ))}
        </div>
      </div>
      <div className="ml-[14px] flex">
        <ScrollBar top={6} height={670} gapTop={80} />
      </div>
    </div>
  </div>
)

const Viewport = () => (
  <div className="relative w-[842px] shrink-0">
    <div className="flex justify-center pl-[3px] pt-[4px]">
      <Tool kind={1} corner sep />
      <Tool kind={2} corner />
      <Tool kind={3} active />
      <Tool kind={4} />
      <Tool kind={5} />
      <Tool kind={6} sep />
      <Tool kind={7} sep />
      <Tool kind={8} sep />
      <Tool kind={9} />
    </div>
    <Scene />
    <div className="absolute left-[94px] top-[813px] w-[199px]">
      <div className="h-[7px] border-x border-b border-[#333]" />
      <div className="mt-[8px] text-center text-[14px] leading-none text-[#333]">1 [m]</div>
    </div>
    <Gizmo />
    <span className="absolute left-[834px] top-[258px]"><Grip /></span>
  </div>
)

const RightPanel = () => (
  <div className="flex h-[548px] w-[293px] shrink-0 flex-col border border-[#ececec] bg-white">
    <div className="flex h-[503px] shrink-0 overflow-hidden border-b border-[#e4e4e4]">
      <div className="w-[279px] overflow-hidden pt-[3px]">
        <Section label="GEOMETRY" className="mb-[5px]" />
        <Row box="-" label="thin tires" tone="font-bold text-[#333]" />
        <Row depth={2} end icon={<Cube />} label="solid_0" />
        <div className="mt-[10px] h-px bg-[#e4e4e4]" />
        <div className="flex h-[44px] items-center pl-[9px] text-[16px] font-bold text-[#999]">SAVED SELECTIONS</div>
        <div className="h-px bg-[#e4e4e4]" />
        <Section label="GEOMETRY PRIMITIVES" plus className="mb-[5px] mt-[4px]" />
        <Row icon={<PrimBox muted />} label="Background Mesh Box" tone="text-[#9a9a9a]" eye />
        <Row icon={<span className="ml-[9px] h-[7px] w-[7px] rounded-full bg-[#bdbdbd]" />} label="Material Point" tone="text-[#9a9a9a]" eye />
        {['1', '2', '3', '4', '5'].map((n) => (
          <Row key={n} icon={<PrimBox />} label={n} />
        ))}
        <Row icon={<Cylinder />} label="Front" tone="text-[#9a9a9a]" eye />
      </div>
      <ScrollBar top={9} height={327} gapTop={4} />
    </div>
    <div className="flex flex-1 items-center justify-between pl-[14px] pr-[26px] text-[15px] text-[#333]">
      <span>Show faces</span>
      <span className="h-[20px] w-[20px] rounded-full border border-[#cfcfcf] bg-white" />
    </div>
  </div>
)

const Floating = () => (
  <>
    <span className="absolute left-[1830px] top-[725px] flex h-[60px] w-[60px] items-center justify-center rounded-full bg-[#0077aa] shadow-[0_4px_14px_rgba(0,0,0,.2)]">
      <span className="ml-[-4px] h-[26px] w-[26px] rounded-[3px] bg-white" />
    </span>
    <span className="absolute left-[1856px] top-[740px] flex h-[45px] w-[59px] items-center rounded-l-full bg-white pl-[11px] shadow-[0_2px_8px_rgba(0,0,0,.12)]">
      <span className="flex h-[30px] w-[30px] items-center justify-center gap-[3px] rounded-full border-[3px] border-[#6a46d8] bg-white">
        <span className="h-[7px] w-[3px] rounded-full bg-[#222]" />
        <span className="text-[11px] font-bold leading-none text-[#222]">&lt;</span>
      </span>
    </span>
    <span className="absolute left-[1865px] top-[685px] flex h-[44px] w-[44px] items-center justify-center rounded-full bg-white shadow-[0_2px_8px_rgba(0,0,0,.1)]">
      <svg width="20" height="20" viewBox="0 0 20 20" fill="none" stroke="#555" strokeWidth="1.7">
        <path d="M5 1.5 a3.5 3.5 0 0 1 3.5 3.5 V8.5 H5 a3.5 3.5 0 0 1 0 -7Z" />
        <path d="M15 1.5 a3.5 3.5 0 0 0 -3.5 3.5 V8.5 H15 a3.5 3.5 0 0 0 0 -7Z" />
        <path d="M5 18.5 a3.5 3.5 0 0 1 0 -7 H8.5 V15 a3.5 3.5 0 0 1 -3.5 3.5Z" />
        <path d="M15 18.5 a3.5 3.5 0 0 0 0 -7 H11.5 V15 a3.5 3.5 0 0 0 3.5 3.5Z" />
      </svg>
    </span>
  </>
)

const TaskIcon = ({ children, running, active }: { children: ReactNode; running?: boolean; active?: boolean }) => (
  <span className="relative flex h-[48px] w-[55px] shrink-0 items-center justify-center">
    {active && <span className="absolute inset-y-0 left-[3.5px] right-[3.5px] rounded-[4px] bg-[#f2efe9]" />}
    <span className="relative flex">{children}</span>
    {running && !active && <span className="absolute bottom-[1px] h-[5px] w-[5px] rounded-full bg-[#777]" />}
    {active && <span className="absolute bottom-[1px] h-[4px] w-[20px] rounded-full bg-[#0a6fd0]" />}
  </span>
)

const Taskbar = () => (
  <div className="flex h-[60px] items-center border-t border-[#aaa] bg-[linear-gradient(90deg,#d9d9d9_0%,#d9d9d9_15%,#efe0cd_23%,#f3e1c9_28%,#e6dbd2_40%,#d8d8d8_50%,#d6d6d6_80%,#efe2cb_87%,#f3e3c8_100%)] [font-family:'Open_Sans',sans-serif] text-[#222]">
    <div className="flex w-[530px] shrink-0 items-center pl-[25px]">
      <span className="relative h-[36px] w-[39px] shrink-0">
        <svg width="30" height="26" viewBox="0 0 30 26" className="absolute bottom-0 left-0">
          <path d="M4 8 C7 8 11 5 11 0 C13 4 12 10 8 11Z" fill="#f0a820" />
          <ellipse cx="9" cy="19" rx="8" ry="7" fill="#8fc0f0" />
          <ellipse cx="21" cy="16" rx="8" ry="9" fill="#a9cff5" />
          <path d="M11 14 C14 18 15 21 12 25 C9 22 9 18 11 14Z M21 12 C25 17 26 20 23 25 C19 21 19 16 21 12Z" fill="#1f78e0" />
        </svg>
        <span className="absolute right-[5px] top-[-4px] flex h-[20px] w-[20px] items-center justify-center rounded-full bg-[#c8281e] text-[13px] leading-none text-white">1</span>
      </span>
      <div className="leading-none">
        <div className="text-[14px]">27°C</div>
        <div className="mt-[7px] text-[14px] text-[#555]">Rain showers</div>
      </div>
    </div>
    <svg width="29" height="29" viewBox="0 0 29 29" className="shrink-0">
      <rect width="14" height="14" fill="#3cc4f5" />
      <rect x="15" width="14" height="14" fill="#25a6ec" />
      <rect y="15" width="14" height="14" fill="#1a96e4" />
      <rect x="15" y="15" width="14" height="14" fill="#0c79d6" />
    </svg>
    <div className="ml-[18px] flex h-[38px] w-[272px] shrink-0 items-center rounded-full border border-[#cfcfcf] bg-[#f8f4ef] pl-[14px] pr-[10px]">
      <Search size={20} strokeWidth={1.8} className="text-[#111]" />
      <span className="ml-[10px] flex-1 text-[16px] text-[#555]">Search</span>
      <svg width="48" height="32" viewBox="0 0 48 32" fill="none">
        <path d="M2 13 H20 M2 18 H20" stroke="#b8a5f0" strokeWidth="2" />
        <path d="M6 15 V7 M14 15 V5" stroke="#4a7fe0" strokeWidth="2" />
        <path d="M43 3 C38 0 37 5 37 10 L36 23 C35 29 30 30 28 26 L26 19" stroke="#d8a020" strokeWidth="3.5" />
      </svg>
    </div>
    <div className="ml-[4px] flex items-center">
      <TaskIcon>
        <span className="relative block h-[26px] w-[28px]">
          <span className="absolute left-[10px] top-0 h-[20px] w-[18px] bg-[#f6f6f6]" />
          <span className="absolute bottom-0 left-0 h-[18px] w-[20px] bg-[#222]" />
          <span className="absolute left-[7px] top-[7px] h-[12px] w-[13px] bg-[#bcbcbc]" />
        </span>
      </TaskIcon>
      <TaskIcon>
        <svg width="28" height="28" viewBox="0 0 28 28">
          <path d="M14 1 C22 1 27 7 27 13 C27 20 21 25 14 25 L10 28 L10 24 C4 22 1 18 1 13 C1 7 6 1 14 1Z" fill="#5c5cc8" />
          <rect x="8" y="9" width="9" height="9" rx="2" fill="#fff" />
          <path d="M18 12 L21 10 V17 L18 15Z" fill="#fff" />
        </svg>
      </TaskIcon>
      <TaskIcon>
        <svg width="28" height="28" viewBox="0 0 28 28">
          <path d="M10 2 C14 0 17 3 16 8 L12 22 C10 28 4 26 3 20 C2 13 5 5 10 2Z" fill="#2aa7e0" />
          <path d="M18 4 C25 7 27 15 24 21 C21 27 13 27 12 23 L16 10 C16 6 17 4 18 4Z" fill="#e8658c" />
          <path d="M8 8 C5 13 5 18 7 22" stroke="#f0c030" strokeWidth="4" fill="none" />
          <path d="M14 24 C18 26 22 24 24 20" stroke="#a060e0" strokeWidth="4" fill="none" />
        </svg>
      </TaskIcon>
      <TaskIcon>
        <svg width="28" height="28" viewBox="0 0 28 28">
          <circle cx="14" cy="14" r="14" fill="#2a9fd6" />
          <path d="M6 14 L21 8 L18 21 L13 17 L11 20 L10 16Z" fill="#fff" />
        </svg>
      </TaskIcon>
      <TaskIcon>
        <svg width="26" height="30" viewBox="0 0 26 30">
          <path d="M6 1 H20 L25 7 L23 18 L13 30 L3 18 L1 7Z" fill="#f0501f" />
          <path d="M8 9 L13 12 L18 9 L19 14 L15 19 L13 24 L11 19 L7 14Z" fill="#fff" />
        </svg>
      </TaskIcon>
      <TaskIcon running>
        <svg width="30" height="28" viewBox="0 0 30 28">
          <path d="M1 2 H12 L15 5 H29 V28 H1Z" fill="#f8c93e" />
          <path d="M1 2 H12 L15 5 H29 V9 H1Z" fill="#dca628" />
          <rect x="11" y="19" width="14" height="4" fill="#1478c8" />
        </svg>
      </TaskIcon>
      <TaskIcon active>
        <svg width="30" height="30" viewBox="0 0 30 30">
          <path d="M15 1 C24 1 29 8 29 15 C29 18 26 20 22 20 C24 16 21 11 15 12 C9 13 6 18 7 24 C2 21 1 15 2 11 C4 5 9 1 15 1Z" fill="#2aa4e0" />
          <path d="M29 15 C29 22 24 29 16 29 C11 29 8 27 7 24 C9 26 20 27 24 20 Z" fill="#1c62b8" />
          <rect x="3" y="17" width="14" height="11" rx="1" fill="#a8651f" />
          <rect x="8" y="14" width="5" height="3" fill="#7a4a16" />
        </svg>
      </TaskIcon>
      <TaskIcon running>
        <span className="relative block h-[30px] w-[30px]">
          <svg width="30" height="30" viewBox="0 0 30 30" fill="none">
            <path d="M4 28 L6 21 C3 15 5 7 11 4 C18 1 26 6 26 14 C26 22 17 26 11 23 Z" stroke="#2a8a4e" strokeWidth="2.6" />
            <path d="M10 10 C10 16 14 19 19 19" stroke="#2a8a4e" strokeWidth="3" />
          </svg>
          <span className="absolute right-[-11px] top-[-7px] flex h-[26px] w-[26px] items-center justify-center rounded-full bg-[#0a78d0] text-[13px] leading-none text-white">39</span>
        </span>
      </TaskIcon>
      <TaskIcon running>
        <svg width="26" height="32" viewBox="0 0 26 32">
          <path d="M10 1 H16 L22 25 H4Z" fill="#f28a1a" />
          <path d="M8.5 9 H17.5 L19 15 H7Z" fill="#eee" />
          <path d="M1 25 H25 V31 H1Z" fill="#e8761a" />
        </svg>
      </TaskIcon>
      <TaskIcon running>
        <span className="flex h-[28px] w-[28px] items-center justify-center rounded-full bg-[#0b5cff] text-[8px] font-bold leading-none text-white">zoom</span>
      </TaskIcon>
    </div>
    <div className="flex-1" />
    <ChevronUp size={20} strokeWidth={1.8} className="mr-[20px]" />
    <div className="w-[36px] text-center text-[14px] leading-[20px]">ENG<br />IN</div>
    <Wifi size={20} strokeWidth={1.6} className="ml-[19px]" />
    <Volume2 size={20} strokeWidth={1.5} className="ml-[11px]" />
    <div className="ml-[11px] w-[87px] text-right text-[14px] leading-[20px]">21:53<br />06-11-2024</div>
    <span className="relative ml-[11px] mr-[24px] flex">
      <Bell size={19} strokeWidth={1.5} />
      <span className="absolute right-[-3px] top-[-5px] text-[9px] font-bold leading-none">z</span>
    </span>
  </div>
)

export default function App() {
  return (
    <div className="relative flex h-[1080px] w-[1920px] flex-col overflow-hidden bg-[#efefef] [font-family:Lato,sans-serif]">
      <TabBar />
      <AddressBar />
      <div className="flex-1 pb-[4px] pl-[3px] pr-[5px]">
        <div className="flex h-full flex-col rounded-[8px] border border-[#e6e6e6] bg-[#f6f6f6]">
          <AppHeader />
          <div className="flex flex-1 pl-[12px] pr-[10px] pt-[11px]">
            <LeftPanel />
            <div className="flex w-[12px] shrink-0 justify-center pt-[408px]"><Grip /></div>
            <CenterPanel />
            <Viewport />
            <RightPanel />
          </div>
          <div className="h-[11px] shrink-0" />
        </div>
      </div>
      <Taskbar />
      <Floating />
    </div>
  )
}
